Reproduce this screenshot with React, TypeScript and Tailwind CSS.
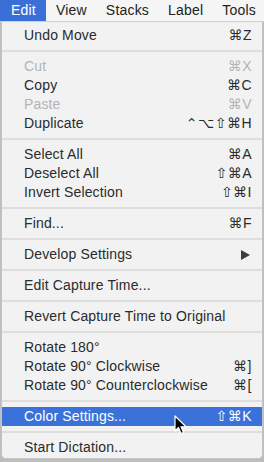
import React from 'react';

type Item =
  | { sep: true }
  | { label: string; keys?: string; disabled?: boolean; active?: boolean; submenu?: boolean; sep?: false };

const items: Item[] = [
  { label: 'Undo Move', keys: '⌘Z' },
  { sep: true },
  { label: 'Cut', keys: '⌘X', disabled: true },
  { label: 'Copy', keys: '⌘C' },
  { label: 'Paste', keys: '⌘V', disabled: true },
  { label: 'Duplicate', keys: '⌃⌥⇧⌘H' },
  { sep: true },
  { label: 'Select All', keys: '⌘A' },
  { label: 'Deselect All', keys: '⇧⌘A' },
  { label: 'Invert Selection', keys: '⇧⌘I' },
  { sep: true },
  { label: 'Find...', keys: '⌘F' },
  { sep: true },
  { label: 'Develop Settings', submenu: true },
  { sep: true },
  { label: 'Edit Capture Time...' },
  { sep: true },
  { label: 'Revert Capture Time to Original' },
  { sep: true },
  { label: 'Rotate 180°' },
  { label: 'Rotate 90° Clockwise', keys: '⌘]' },
  { label: 'Rotate 90° Counterclockwise', keys: '⌘[' },
  { sep: true },
  { label: 'Color Settings...', keys: '⇧⌘K', active: true },
  { sep: true },
  { label: 'Start Dictation...' },
];

const menus = ['Edit', 'View', 'Stacks', 'Label', 'Tools'];

export default function App() {
  return (
    <div
      className="relative w-[264px] h-[462px] overflow-hidden bg-[#bdbdbd] text-[14px] text-[#2b2b2b]"
      style={{ fontFamily: '"Liberation Sans", "DejaVu Sans", sans-serif' }}
    >
      {/* menu bar */}
      <div className="flex h-[22px] items-center gap-[19px] bg-[#f5f5f5] border-b border-[#d0d0d0] text-[14px] tracking-[0.2px]">
        {menus.map((m, i) => (
          <div
            key={m}
            className={`h-full flex items-center ${i === 0 ? 'bg-[#3a6fd8] text-white pl-[11px] pr-[10px] -mr-[9px]' : 'text-[#222]'}`}
          >
            {m}
          </div>
        ))}
      </div>

      {/* dropdown */}
      <div className="mx-[1px] w-[262px] h-[437px] bg-[#f2f2f2] border-x border-b border-[#c4c4c4] rounded-b-[5px] pt-[4px] tracking-[0.15px]">
        {items.map((it, i) =>
          it.sep ? (
            <div key={i} className="py-[5px]">
              <div className="h-[2px] bg-[#dedede]" />
            </div>
          ) : (
            <div
              key={i}
              className={`flex h-[19px] items-center justify-between pl-[22px] pr-[10px] ${
                it.active ? 'bg-[#3a72d9] text-white' : it.disabled ? 'text-[#b4b4b4]' : ''
              }`}
            >
              <span>{it.label}</span>
              {it.keys && <span className="tracking-[0.5px]">{it.keys}</span>}
              {it.submenu && (
                <svg width="9" height="10" viewBox="0 0 9 10" className="mr-[2px]">
                  <path d="M0 0 L9 5 L0 10 Z" fill="#3c3c3c" />
                </svg>
              )}
            </div>
          )
        )}
      </div>

      {/* cursor */}
      <svg width="14" height="20" viewBox="0 0 14 20" className="absolute left-[174px] top-[415px]">
        <path
          d="M1 1 L1 16 L4.5 12.5 L7 18.5 L9.5 17.5 L7 11.8 L12 11.8 Z"
          fill="#000"
          stroke="#fff"
          strokeWidth="1.2"
          strokeLinejoin="round"
        />
      </svg>
    </div>
  );
}
